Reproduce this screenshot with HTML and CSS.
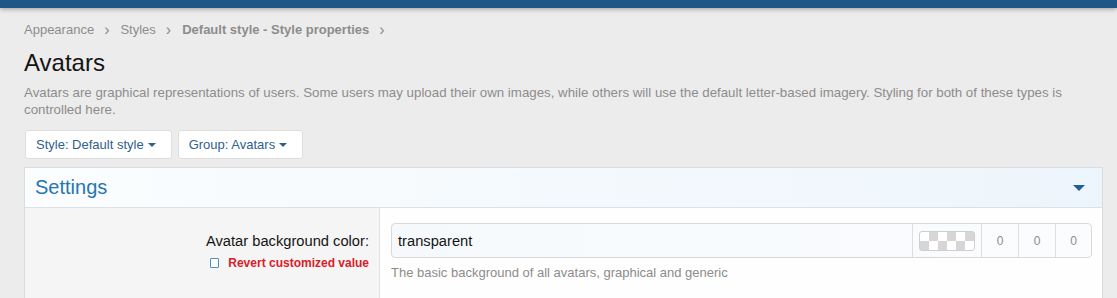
FILE: index.html
```html
<!DOCTYPE html>
<html>
<head>
<meta charset="utf-8">
<link rel="stylesheet" href="styles.css">
</head>
<body>
<div class="topbar"></div>
<div class="page">
  <nav class="crumbs">
    <span class="crumb">Appearance</span><span class="sep">&#8250;</span>
    <span class="crumb">Styles</span><span class="sep">&#8250;</span>
    <span class="crumb strong">Default style - Style properties</span><span class="sep">&#8250;</span>
  </nav>
  <h1 class="title">Avatars</h1>
  <p class="desc">Avatars are graphical representations of users. Some users may upload their own images, while others will use the default letter-based imagery. Styling for both of these types is controlled here.</p>
  <div class="buttons">
    <span class="btn">Style: Default style<span class="caret"></span></span>
    <span class="btn">Group: Avatars<span class="caret"></span></span>
  </div>
  <div class="block">
    <div class="block-header">
      <span class="block-title">Settings</span>
      <span class="toggle"></span>
    </div>
    <div class="row">
      <div class="row-label">
        <div class="label">Avatar background color:</div>
        <div class="revert"><span class="chk"></span>Revert customized value</div>
      </div>
      <div class="row-input">
        <div class="color-input">
          <div class="text">transparent</div>
          <div class="cell swatch-cell"><span class="swatch"></span></div>
          <div class="cell num">0</div>
          <div class="cell num">0</div>
          <div class="cell num">0</div>
        </div>
        <div class="hint">The basic background of all avatars, graphical and generic</div>
      </div>
    </div>
  </div>
</div>
</body>
</html>
```

FILE: styles.css
```css
* { box-sizing: border-box; }
html, body { margin: 0; padding: 0; }
body {
  background: #ececec;
  font-family: "Liberation Sans", Arial, sans-serif;
  color: #141414;
  overflow: hidden;
}
.topbar {
  height: 8px;
  background: #1e5687;
  box-shadow: 0 1px 5px rgba(0,0,0,0.35);
  position: relative;
}
.page {
  padding: 0 14px 0 24px;
}
.crumbs {
  display: flex;
  align-items: center;
  font-size: 13px;
  line-height: 17px;
  color: #8c8c8c;
  padding-top: 13px;
}
.crumb.strong { font-weight: bold; }
.sep {
  font-size: 16px;
  margin: 0 11px 0 10px;
  color: #8c8c8c;
}
.title {
  margin: 10px 0 0;
  font-size: 24px;
  font-weight: normal;
  line-height: 30px;
  color: #141414;
}
.desc {
  margin: 6px 0 0;
  font-size: 13.3px;
  line-height: 17px;
  color: #8c8c8c;
}
.buttons {
  display: flex;
  gap: 6px;
  margin-top: 12px;
  padding-left: 1px;
}
.btn {
  display: flex;
  align-items: center;
  height: 29px;
  padding: 0 15px 0 10px;
  background: #fff;
  border: 1px solid #dedede;
  border-radius: 3px;
  font-size: 13px;
  color: #2f5f8b;
}
.caret {
  display: inline-block;
  margin-left: 4px;
  width: 0; height: 0;
  border-left: 4px solid transparent;
  border-right: 4px solid transparent;
  border-top: 4px solid #2f5f8b;
}
.block {
  margin-top: 8px;
  border: 1px solid #dcdcdc;
  border-bottom: none;
  background: #fefefe;
}
.block-header {
  height: 40px;
  display: flex;
  align-items: center;
  justify-content: space-between;
  padding: 0 17px 0 10px;
  background: linear-gradient(to right, #fbfdfe, #edf5fc);
  border-bottom: 1px solid #dbe1e6;
}
.block-title {
  font-size: 20px;
  color: #2577b1;
}
.toggle {
  width: 0; height: 0;
  border-left: 6px solid transparent;
  border-right: 6px solid transparent;
  border-top: 6px solid #235f96;
  margin-top: 1px;
}
.row {
  display: grid;
  grid-template-columns: 355px 1fr;
  height: 100px;
}
.row-label {
  background: #f5f5f5;
  border-right: 1px solid #e3e3e3;
  padding: 24px 10px 0 0;
  text-align: right;
}
.label {
  font-size: 14.7px;
  line-height: 18px;
  color: #141414;
}
.revert {
  display: flex;
  align-items: center;
  justify-content: flex-end;
  margin-top: 6px;
  font-size: 12px;
  line-height: 14px;
  font-weight: bold;
  color: #d8202a;
}
.chk {
  width: 9px; height: 10px;
  border: 1px solid #4a90c8;
  border-radius: 1px;
  background: #fff;
  margin-right: 9px;
}
.row-input {
  padding: 15px 10px 0 11px;
}
.color-input {
  display: flex;
  height: 35px;
  border: 1px solid #d9d9d9;
  border-radius: 4px;
  background: linear-gradient(to right, #f6f9fc, #fafcfe);
}
.text {
  flex: 1;
  display: flex;
  align-items: center;
  padding-left: 6px;
  font-size: 14.7px;
  color: #141414;
}
.cell {
  display: flex;
  align-items: center;
  justify-content: center;
  border-left: 1px solid #dedede;
}
.swatch-cell { width: 69px; }
.swatch {
  width: 56px; height: 20px;
  border: 1px solid #cfcfcf;
  border-radius: 3px;
  background-color: #fff;
  background-image: conic-gradient(#d6d6d6 25%, #fff 0 50%, #d6d6d6 0 75%, #fff 0);
  background-size: 18px 18px;
}
.num {
  width: 37px;
  font-size: 12px;
  color: #8c8c8c;
}
.num:last-child { width: 36px; }
.hint {
  margin-top: 6px;
  font-size: 13px;
  line-height: 17px;
  color: #8c8c8c;
}
```
